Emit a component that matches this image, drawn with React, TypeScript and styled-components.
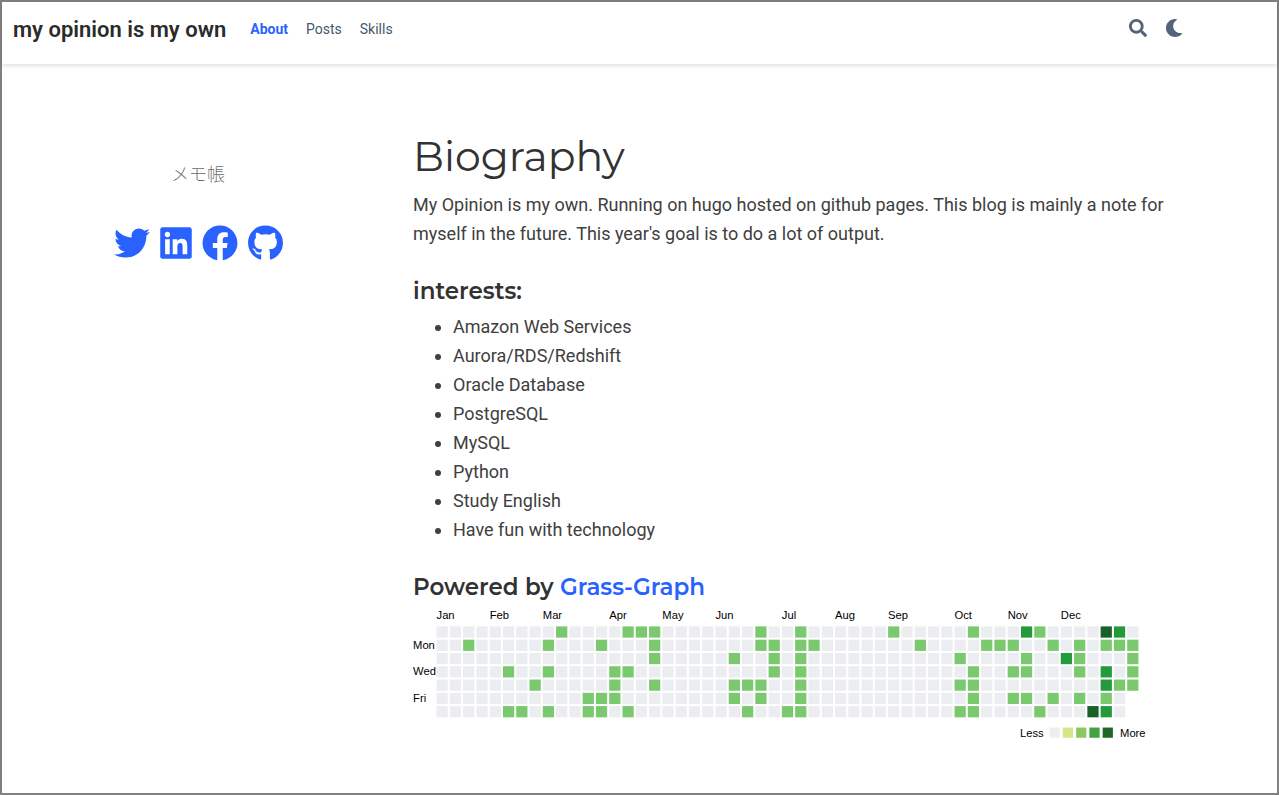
import React from "react";
import styled, { createGlobalStyle } from "styled-components";
import { FaFacebook, FaGithub, FaLinkedin, FaMoon, FaSearch, FaTwitter } from "react-icons/fa";

const GlobalStyle = createGlobalStyle`
  *, *::before, *::after { box-sizing: border-box; }
  body {
    margin: 0;
    background: #fff;
    color: #323232;
    font-family: Roboto, "Noto Sans CJK JP", sans-serif;
    font-size: 18px;
    line-height: 29px;
  }
  a { color: #2962ff; text-decoration: none; }
`;

const Page = styled.div`
  min-height: 100vh;
  border: 2px solid #808080;
`;

const Header = styled.header`
  box-shadow: 0 2px 4px rgba(0, 0, 0, 0.12);
`;

const Bar = styled.div`
  display: flex;
  align-items: center;
  max-width: 1192px;
  height: 62px;
  padding: 0 11px 8px;
`;

const Brand = styled.a`
  && { color: #2b2b2b; }
  margin-right: 24px;
  font-size: 22px;
  font-weight: 600;
`;

const Nav = styled.nav`
  display: flex;
  gap: 18px;
  flex: 1;
  font-size: 14px;
`;

const NavLink = styled.a<{ $active?: boolean }>`
  && { color: ${(p) => (p.$active ? "#2962ff" : "#44576b")}; }
  font-weight: ${(p) => (p.$active ? 700 : 400)};
`;

const Tools = styled.div`
  display: flex;
  gap: 18px;
  padding-bottom: 2px;
`;

const ToolButton = styled.button`
  display: flex;
  padding: 0;
  border: 0;
  background: none;
  color: #526479;
  font-size: 18px;
  cursor: pointer;
`;

const Main = styled.main`
  display: grid;
  grid-template-columns: 37fr 77fr;
  gap: 30px;
  max-width: 1192px;
  padding: 66px 11px 36px;
`;

const Profile = styled.aside`
  display: flex;
  flex-direction: column;
  align-items: center;
  gap: 37px;
  padding-top: 29px;
`;

const Role = styled.p`
  margin: 0;
  color: rgba(0, 0, 0, 0.6);
  font-family: "Noto Sans CJK JP", sans-serif;
  font-weight: 300;
`;

const Social = styled.ul`
  display: flex;
  gap: 10px;
  margin: 0;
  padding: 0;
  list-style: none;
`;

const SocialLink = styled.a<{ $width: number }>`
  display: block;
  svg { display: block; width: ${(p) => p.$width}px; height: 36px; }
`;

const Title = styled.h1`
  margin: 0 0 8px;
  font-family: Montserrat, sans-serif;
  font-size: 41px;
  font-weight: 400;
  line-height: 52px;
`;

const Text = styled.p`
  margin: 0 0 29px;
  color: #404040;
`;

const Heading = styled.h2`
  margin: 0 0 7px;
  font-family: Montserrat, sans-serif;
  font-size: 23px;
  font-weight: 600;
  line-height: 28px;
`;

const Interests = styled.ul`
  margin: 0 0 29px;
  padding-left: 40px;
  color: #404040;
`;

const Graph = styled.svg`
  display: block;
  width: 100%;
  max-width: 750px;
  font-family: "Liberation Sans", Arial, sans-serif;
  font-size: 11px;
  fill: #000;
`;

const PITCH = 13;
const LEFT = 23;
const TOP = 18;
const LEVELS = ["#ebedf0", "#7bc96f", "#239a3b", "#196127"];
const LEGEND = ["#eeeeee", "#d6e685", "#8cc665", "#44a340", "#1e6823"];

const MONTHS: [string, number][] = [
  ["Jan", 0], ["Feb", 4], ["Mar", 8], ["Apr", 13], ["May", 17], ["Jun", 21],
  ["Jul", 26], ["Aug", 30], ["Sep", 34], ["Oct", 39], ["Nov", 43], ["Dec", 47],
];

const DAYS: [string, number][] = [["Mon", 1], ["Wed", 3], ["Fri", 5]];

// Weeks with activity, one list per weekday, keyed by level.
const ACTIVITY: Record<number, number[]>[] = [
  { 1: [9, 14, 15, 16, 24, 27, 34, 40, 45], 2: [44, 51], 3: [50] },
  { 1: [2, 8, 12, 16, 24, 25, 27, 28, 36, 41, 42, 43, 46, 48, 50, 51, 52] },
  { 1: [16, 22, 25, 27, 39, 44, 48, 52], 2: [47] },
  { 1: [5, 8, 13, 14, 25, 27, 40, 43, 44, 48, 52], 2: [50] },
  { 1: [7, 13, 16, 22, 23, 24, 27, 39, 40, 51, 52], 2: [50] },
  { 1: [11, 12, 13, 22, 24, 27, 40, 43, 44, 46, 48, 50] },
  { 1: [5, 6, 8, 11, 12, 14, 23, 26, 27, 39, 40, 45], 2: [50], 3: [49] },
];

const levelOf = (day: number, week: number) =>
  [1, 2, 3].find((level) => ACTIVITY[day][level]?.includes(week)) ?? 0;

function GrassGraph() {
  return (
    <Graph viewBox="0 0 734 134" role="img" aria-label="Contribution graph">
      {MONTHS.map(([name, week]) => (
        <text key={name} x={LEFT + week * PITCH} y={11}>{name}</text>
      ))}
      {DAYS.map(([name, day]) => (
        <text key={name} x={0} y={TOP + day * PITCH + 9}>{name}</text>
      ))}
      {ACTIVITY.map((_, day) =>
        Array.from({ length: day < 5 ? 53 : 52 }, (_, week) => (
          <rect
            key={`${day}-${week}`}
            x={LEFT + week * PITCH}
            y={TOP + day * PITCH}
            width={11}
            height={11}
            fill={LEVELS[levelOf(day, week)]}
          />
        ))
      )}
      <text x={594} y={126}>Less</text>
      {LEGEND.map((color, i) => (
        <rect key={color} x={623 + i * PITCH} y={117} width={10} height={10} fill={color} />
      ))}
      <text x={692} y={126}>More</text>
    </Graph>
  );
}

const INTERESTS = [
  "Amazon Web Services", "Aurora/RDS/Redshift", "Oracle Database", "PostgreSQL",
  "MySQL", "Python", "Study English", "Have fun with technology",
];

const SOCIAL = [
  { name: "Twitter", Icon: FaTwitter, width: 36 },
  { name: "LinkedIn", Icon: FaLinkedin, width: 32 },
  { name: "Facebook", Icon: FaFacebook, width: 36 },
  { name: "GitHub", Icon: FaGithub, width: 35 },
];

export default function App() {
  return (
    <Page>
      <GlobalStyle />
      <Header>
        <Bar>
          <Brand href="#">my opinion is my own</Brand>
          <Nav>
            <NavLink href="#about" $active>About</NavLink>
            <NavLink href="#posts">Posts</NavLink>
            <NavLink href="#skills">Skills</NavLink>
          </Nav>
          <Tools>
            <ToolButton aria-label="Search"><FaSearch /></ToolButton>
            <ToolButton aria-label="Toggle dark mode"><FaMoon /></ToolButton>
          </Tools>
        </Bar>
      </Header>
      <Main id="about">
        <Profile>
          <Role lang="ja">メモ帳</Role>
          <Social>
            {SOCIAL.map(({ name, Icon, width }) => (
              <li key={name}>
                <SocialLink href="#" aria-label={name} $width={width}><Icon /></SocialLink>
              </li>
            ))}
          </Social>
        </Profile>
        <section>
          <Title>Biography</Title>
          <Text>
            My Opinion is my own. Running on hugo hosted on github pages. This blog is mainly a note for
            myself in the future. This year's goal is to do a lot of output.
          </Text>
          <Heading>interests:</Heading>
          <Interests>
            {INTERESTS.map((item) => <li key={item}>{item}</li>)}
          </Interests>
          <Heading>Powered by <a href="#">Grass-Graph</a></Heading>
          <GrassGraph />
        </section>
      </Main>
    </Page>
  );
}
